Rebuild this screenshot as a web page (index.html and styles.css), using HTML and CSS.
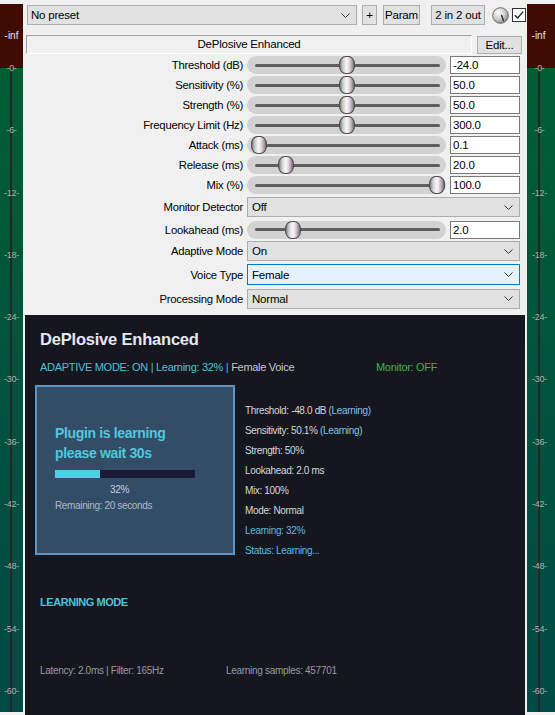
FILE: index.html
```html
<!DOCTYPE html>
<html>
<head>
<meta charset="utf-8">
<link rel="stylesheet" href="styles.css">
</head>
<body>
<div class="app">
  <div class="meter meter-left">
    <div class="meter-red"><span class="inf">-inf</span></div>
    <div class="meter-green"></div>
    <div class="meter-line"></div>
    <div class="ticks">
      <span class="tick">-0-</span><span class="tick">-6-</span><span class="tick">-12-</span><span class="tick">-18-</span><span class="tick">-24-</span><span class="tick">-30-</span><span class="tick">-36-</span><span class="tick">-42-</span><span class="tick">-48-</span><span class="tick">-54-</span><span class="tick">-60-</span>
    </div>
  </div>

  <div class="main">
    <div class="topbar">
      <div class="combo preset"><span>No preset</span><svg class="chev" width="9" height="5" viewBox="0 0 9 5"><polyline points="0.5,0.5 4.5,4.5 8.5,0.5" fill="none" stroke="#333" stroke-width="1"/></svg></div>
      <div class="btn plus">+</div>
      <div class="btn param">Param</div>
      <div class="btn io">2 in 2 out</div>
      <svg class="knob" width="17" height="17" viewBox="0 0 17 17">
        <defs><radialGradient id="kg" cx="35%" cy="30%" r="75%"><stop offset="0" stop-color="#fbfbfb"/><stop offset="0.55" stop-color="#cfcfcf"/><stop offset="1" stop-color="#8c8c8c"/></radialGradient></defs>
        <circle cx="8.5" cy="8.5" r="7.8" fill="url(#kg)" stroke="#6a6a6a" stroke-width="1"/>
        <line x1="9.4" y1="8" x2="11.6" y2="14" stroke="#222" stroke-width="1.3"/>
      </svg>
      <svg class="check" width="14" height="14" viewBox="0 0 14 14">
        <rect x="0.5" y="0.5" width="13" height="13" fill="#fff" stroke="#333"/>
        <polyline points="2.8,7.2 5.6,10 11.2,3.6" fill="none" stroke="#222" stroke-width="1.3"/>
      </svg>
    </div>

    <div class="titlerow">
      <div class="titlebox">DePlosive Enhanced</div>
      <div class="btn edit">Edit...</div>
    </div>

    <div class="params">
      <div class="row slider-row"><div class="label">Threshold (dB)</div><div class="track"><div class="thumb" style="left:92px"></div></div><div class="value">-24.0</div></div>
      <div class="row slider-row"><div class="label">Sensitivity (%)</div><div class="track"><div class="thumb" style="left:92px"></div></div><div class="value">50.0</div></div>
      <div class="row slider-row"><div class="label">Strength (%)</div><div class="track"><div class="thumb" style="left:92px"></div></div><div class="value">50.0</div></div>
      <div class="row slider-row"><div class="label">Frequency Limit (Hz)</div><div class="track"><div class="thumb" style="left:92px"></div></div><div class="value">300.0</div></div>
      <div class="row slider-row"><div class="label">Attack (ms)</div><div class="track"><div class="thumb" style="left:4px"></div></div><div class="value">0.1</div></div>
      <div class="row slider-row"><div class="label">Release (ms)</div><div class="track"><div class="thumb" style="left:31px"></div></div><div class="value">20.0</div></div>
      <div class="row slider-row"><div class="label">Mix (%)</div><div class="track"><div class="thumb" style="left:182px"></div></div><div class="value">100.0</div></div>
      <div class="row monitor-row"><div class="label">Monitor Detector</div><div class="combo select"><span>Off</span><svg class="chev" width="9" height="5" viewBox="0 0 9 5"><polyline points="0.5,0.5 4.5,4.5 8.5,0.5" fill="none" stroke="#333" stroke-width="1"/></svg></div></div>
      <div class="row look-row"><div class="label">Lookahead (ms)</div><div class="track"><div class="thumb" style="left:38px"></div></div><div class="value">2.0</div></div>
      <div class="row adaptive-row"><div class="label">Adaptive Mode</div><div class="combo select"><span>On</span><svg class="chev" width="9" height="5" viewBox="0 0 9 5"><polyline points="0.5,0.5 4.5,4.5 8.5,0.5" fill="none" stroke="#333" stroke-width="1"/></svg></div></div>
      <div class="row voice-row"><div class="label">Voice Type</div><div class="combo select focused"><span>Female</span><svg class="chev" width="9" height="5" viewBox="0 0 9 5"><polyline points="0.5,0.5 4.5,4.5 8.5,0.5" fill="none" stroke="#333" stroke-width="1"/></svg></div></div>
      <div class="row proc-row"><div class="label">Processing Mode</div><div class="combo select"><span>Normal</span><svg class="chev" width="9" height="5" viewBox="0 0 9 5"><polyline points="0.5,0.5 4.5,4.5 8.5,0.5" fill="none" stroke="#333" stroke-width="1"/></svg></div></div>
    </div>

    <div class="panel">
      <div class="p-title">DePlosive Enhanced</div>
      <div class="p-status">
        <span class="status-left"><span class="cyan">ADAPTIVE MODE: ON | Learning: 32% |</span> <span class="grey">Female Voice</span></span>
        <span class="green">Monitor: OFF</span>
      </div>
      <div class="p-row">
        <div class="learnbox">
          <div class="lb-title">Plugin is learning<br>please wait 30s</div>
          <div class="bar"><div class="bar-fill" style="width:32%"></div></div>
          <div class="lb-pct">32%</div>
          <div class="lb-rem">Remaining: 20 seconds</div>
        </div>
        <div class="details">
          <div>Threshold: -48.0 dB <span class="lblue">(Learning)</span></div>
          <div>Sensitivity: 50.1% <span class="lblue">(Learning)</span></div>
          <div>Strength: 50%</div>
          <div>Lookahead: 2.0 ms</div>
          <div>Mix: 100%</div>
          <div>Mode: Normal</div>
          <div class="sky">Learning: 32%</div>
          <div class="sky">Status: Learning...</div>
        </div>
      </div>
      <div class="p-mode">LEARNING MODE</div>
      <div class="p-foot"><span class="foot-left">Latency: 2.0ms | Filter: 165Hz</span><span>Learning samples: 457701</span></div>
    </div>
  </div>

  <div class="meter meter-right">
    <div class="meter-red"><span class="inf">-inf</span></div>
    <div class="meter-green"></div>
    <div class="meter-line"></div>
    <div class="ticks">
      <span class="tick">-0-</span><span class="tick">-6-</span><span class="tick">-12-</span><span class="tick">-18-</span><span class="tick">-24-</span><span class="tick">-30-</span><span class="tick">-36-</span><span class="tick">-42-</span><span class="tick">-48-</span><span class="tick">-54-</span><span class="tick">-60-</span>
    </div>
  </div>
</div>
</body>
</html>
```

FILE: styles.css
```css
* { box-sizing: border-box; }
html, body { margin: 0; padding: 0; }
body {
  width: 555px;
  height: 715px;
  background: #f0f0f0;
  font-family: "Liberation Sans", Arial, sans-serif;
  overflow: hidden;
}
.app { display: flex; height: 715px; }

/* meters */
.meter {
  position: relative;
  margin-top: 4px;
  height: 708px;
  display: flex;
  flex-direction: column;
  flex: none;
}
.meter-left { width: 23px; }
.meter-right { width: 28px; }
.meter-red {
  height: 64px;
  background: #3f0b02;
  padding-top: 26px;
  width: 100%;
}
.inf {
  display: block;
  width: 23px;
  text-align: center;
  font-size: 10px;
  line-height: 12px;
  color: #e6e6e6;
}
.meter-green {
  flex: 1;
  background: linear-gradient(#005e33, #00533d 50%, #004a45);
}
.meter-line {
  position: absolute;
  left: 10px;
  top: 64px;
  bottom: 0;
  width: 2px;
  background: #262626;
}
.meter-right .meter-line { left: 11px; }
.ticks {
  position: absolute;
  top: 58px;
  left: 0;
  width: 23px;
  display: flex;
  flex-direction: column;
}
.meter-right .ticks { left: 1px; }
.tick {
  display: block;
  height: 62.3px;
  line-height: 12px;
  text-align: center;
  font-size: 9px;
  color: #b0b0b0;
  letter-spacing: -0.3px;
}

/* main */
.main {
  flex: 1;
  display: flex;
  flex-direction: column;
  min-width: 0;
}
.topbar {
  display: flex;
  align-items: center;
  height: 20px;
  margin-top: 5px;
  padding-left: 4px;
}
.combo {
  display: flex;
  align-items: center;
  justify-content: space-between;
  background: #e1e1e1;
  border: 1px solid #adadad;
  font-size: 11.5px;
  letter-spacing: -0.2px;
  color: #000;
  padding: 0 6px 0 3px;
}
.preset { width: 330px; height: 20px; }
.chev { display: block; flex: none; }
.btn {
  display: flex;
  align-items: center;
  justify-content: center;
  height: 20px;
  background: #e1e1e1;
  border: 1px solid #adadad;
  font-size: 11.5px;
  letter-spacing: -0.2px;
  color: #000;
}
.plus { width: 15px; margin-left: 5px; }
.param { width: 37px; margin-left: 6px; }
.io { width: 54px; margin-left: 11px; }
.knob { margin-left: 7px; display: block; }
.check { margin-left: 3px; display: block; }

.titlerow {
  display: flex;
  height: 19px;
  margin-top: 10px;
  padding-left: 3px;
}
.titlebox {
  width: 446px;
  height: 19px;
  border-top: 1px solid #a0a0a0;
  border-left: 1px solid #a0a0a0;
  border-bottom: 1px solid #ffffff;
  border-right: 1px solid #ffffff;
  background: #f0f0f0;
  text-align: center;
  font-size: 11.5px;
  letter-spacing: -0.2px;
  line-height: 17px;
}
.edit { width: 45px; height: 18px; margin-left: 5px; margin-top: 1px; }

.params {
  margin-top: 1px;
  display: flex;
  flex-direction: column;
}
.row {
  display: flex;
  align-items: center;
}
.slider-row { height: 20px; }
.monitor-row { height: 24px; }
.look-row { height: 21px; }
.adaptive-row { height: 22px; }
.voice-row { height: 25px; }
.proc-row { height: 23px; }
.label {
  width: 220px;
  text-align: right;
  font-size: 11.3px;
  letter-spacing: -0.25px;
  color: #000;
  flex: none;
}
.track {
  position: relative;
  margin-left: 4px;
  width: 199px;
  height: 18px;
  border-radius: 9px;
  background: #d2d2d2;
  flex: none;
}
.track::before {
  content: "";
  position: absolute;
  left: 8px;
  right: 6px;
  top: 7.5px;
  height: 3px;
  border-radius: 2px;
  background: #5e5e5e;
}
.thumb {
  position: absolute;
  top: 0;
  width: 16px;
  height: 18px;
  border: 1px solid #4a4a4a;
  border-radius: 7px / 8px;
  background: linear-gradient(90deg, #7c7c7c 0%, #cfcfcf 22%, #f6f6f6 45%, #ece2e8 62%, #b9a9b5 82%, #6e6e6e 100%);
}
.value {
  margin-left: 4px;
  width: 70px;
  height: 18px;
  background: #fff;
  border: 1px solid #7a7a7a;
  font-size: 11.5px;
  letter-spacing: -0.2px;
  line-height: 16px;
  padding-left: 2px;
  flex: none;
}
.select {
  margin-left: 4px;
  width: 273px;
  height: 20px;
  padding-left: 4px;
}
.select.focused {
  height: 21px;
  background: #e5f1fb;
  border-color: #0078d7;
}

/* dark panel */
.panel {
  flex: 1;
  margin: 5px 2px 0 2px;
  background: #15161e;
  padding: 14px 0 0 10px;
  color: #d8d8e0;
}
.p-title {
  margin-left: 5px;
  font-size: 16.5px;
  font-weight: bold;
  line-height: 20px;
  letter-spacing: -0.2px;
  color: #e6e6f4;
}
.p-status {
  margin-top: 11px;
  margin-left: 5px;
  display: flex;
  font-size: 11px;
  line-height: 14px;
  letter-spacing: -0.3px;
}
.status-left { width: 336px; flex: none; }
.cyan { color: #4fc1da; }
.grey { color: #c6c6ce; }
.green { color: #44b04c; }
.p-row {
  margin-top: 11px;
  display: flex;
}
.learnbox {
  width: 200px;
  height: 170px;
  border: 2px solid #5f94c6;
  background: #334d66;
  padding: 36px 0 0 18px;
  flex: none;
}
.lb-title {
  font-size: 14px;
  font-weight: bold;
  line-height: 20px;
  letter-spacing: -0.35px;
  color: #4fc7df;
}
.bar {
  margin-top: 7px;
  width: 140px;
  height: 8px;
  background: #1a1a36;
}
.bar-fill { height: 100%; background: #4fd0e8; }
.lb-pct {
  margin-top: 5px;
  padding-left: 55px;
  font-size: 10px;
  line-height: 14px;
  letter-spacing: -0.3px;
  color: #c6cede;
}
.lb-rem {
  margin-top: 2px;
  font-size: 10px;
  line-height: 14px;
  letter-spacing: -0.35px;
  color: #aeb9c9;
}
.details {
  margin-left: 10px;
  padding-top: 16px;
  font-size: 10px;
  line-height: 20px;
  letter-spacing: -0.35px;
  color: #d6d6de;
}
.lblue { color: #7cc4e6; }
.sky { color: #5bbbe0; }
.p-mode {
  margin-top: 34px;
  margin-left: 5px;
  font-size: 11px;
  font-weight: bold;
  line-height: 14px;
  letter-spacing: -0.45px;
  color: #4fc1da;
}
.p-foot {
  margin-top: 55px;
  margin-left: 5px;
  display: flex;
  font-size: 10px;
  line-height: 14px;
  letter-spacing: -0.3px;
  color: #9898a8;
}
.foot-left { width: 186px; flex: none; }
```
